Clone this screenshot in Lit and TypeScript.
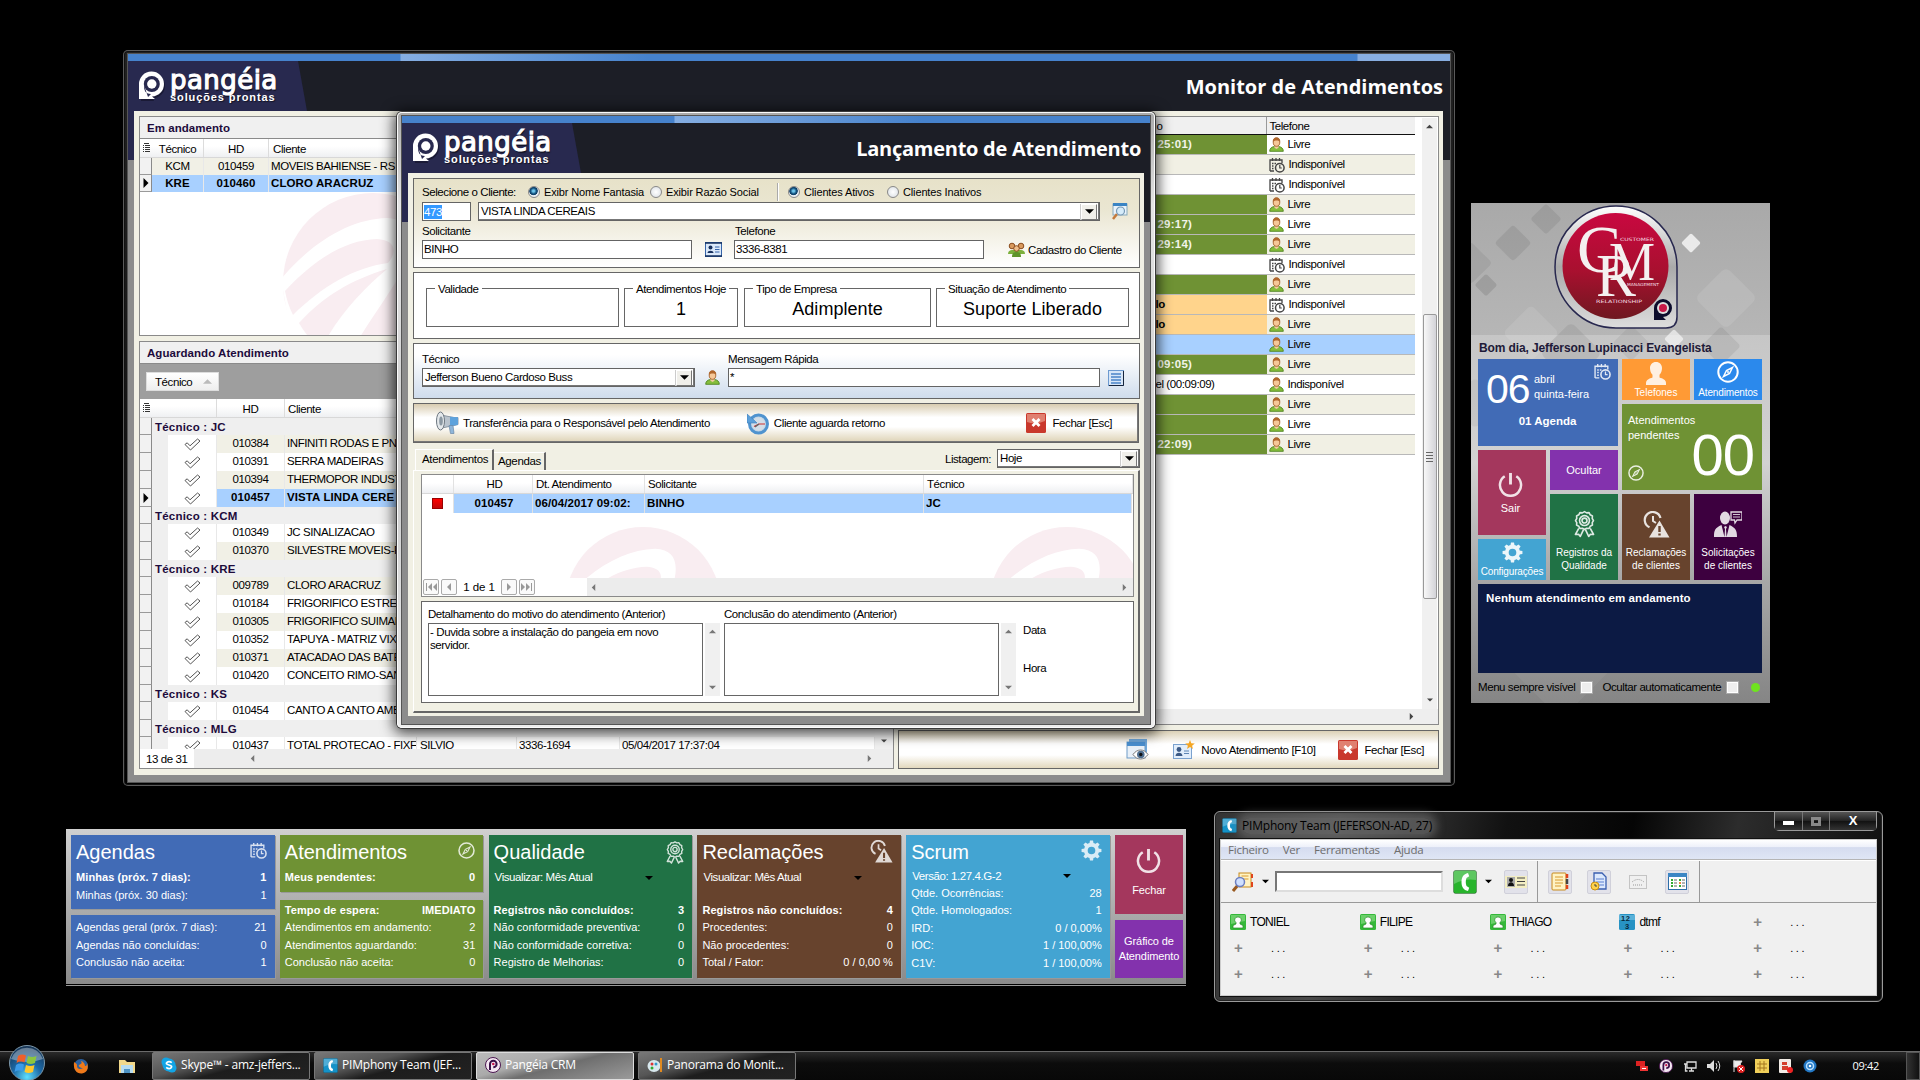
import { LitElement, html, svg, css, nothing } from "lit";
import { customElement, property } from "lit/decorators.js";

/* ---------- icons ---------- */

const person = html`<svg width="15" height="15" viewBox="0 0 15 15">
  <path d="M.700 14.300c0-3 2-4.400 4.800-4.800h4c2.800.4 4.800 1.800 4.800 4.800z" fill="#86bd3c" stroke="#4d8420" stroke-width=".9"/>
  <path d="M5.500 8.500h4v2.300L7.500 12l-2-1.200z" fill="#f0c9a0"/>
  <ellipse cx="7.500" cy="5" rx="3.300" ry="4.300" fill="#f6c898" stroke="#a5612a" stroke-width=".9"/>
  <path d="M4 4.800C4 1.500 5.800.7 7.500.7S11 1.500 11 4.800C9.500 3.200 6 3 4 4.800z" fill="#b0662c"/>
</svg>`;

const calClock = (c: string, s: number) => html`<svg width=${s} height=${s} viewBox="0 0 16 16" fill="none" stroke=${c}>
  <path d="M1 14V3h12v3M1 14h4M3.500 1v3M7 1v3M10.500 1v3" stroke-width="1.300"/>
  <path d="M3 6.500h1.500M5.500 6.500H7M3 9h1.500M3 11.500h1.500" stroke-width="1.400"/>
  <circle cx="10.800" cy="10.800" r="4.300" stroke-width="1.500"/><path d="M10.800 8v3h2" stroke-width="1.200"/>
</svg>`;

const compass = (s: number) => html`<svg width=${s} height=${s} viewBox="0 0 22 22" fill="none" stroke="#fff">
  <circle cx="11" cy="11" r="9.700" stroke-width="2"/>
  <path d="M15.500 6.500l-3 6-6 3 3-6z" stroke-width="1.500"/><circle cx="11" cy="11" r="1" fill="#fff" stroke="none"/>
</svg>`;

const ribbon = (w: number, h: number) => html`<svg width=${w} height=${h} viewBox="0 0 22 28" fill="none" stroke="#fff" stroke-width="1.700" stroke-linejoin="round">
  <path d="M11 1l2.200 1.300 2.600-.2 1.200 2.300 2.300 1.200-.2 2.600L20.400 10.400l-1.300 2.200.2 2.600-2.300 1.200-1.200 2.300-2.600-.2L11 19.800l-2.200-1.300-2.600.2-1.200-2.300-2.300-1.200.2-2.600L1.600 10.400l1.300-2.200-.2-2.600 2.300-1.200 1.200-2.300 2.600.2z"/>
  <circle cx="11" cy="10.400" r="5.200"/><circle cx="11" cy="10.400" r="2.600"/>
  <path d="M5 18.500L1.500 25l3.300-.3L6.600 27 10 20M17 18.500l3.500 6.500-3.300-.3-1.800 2.300L12 20"/>
</svg>`;

const alertClock = (w: number, h: number, bg: string) => html`<svg width=${w} height=${h} viewBox="0 0 27 27" fill="none">
  <path d="M6.500 16.300A8 8 0 1 1 17.500 7" stroke="#fff" stroke-width="2.200"/><path d="M10 5v5l3 2" stroke="#fff" stroke-width="2"/>
  <path d="M16.500 9.500L26.500 26.500H6z" fill="#fff"/><path d="M16.500 15v6M16.500 22.500v2" stroke=${bg} stroke-width="2.400"/>
</svg>`;

const teeth = [0, 45, 90, 135, 180, 225, 270, 315];
const gear = (s: number) => html`<svg width=${s} height=${s} viewBox="0 0 22 22">
  <circle cx="11" cy="11" r="6" fill="none" stroke="#fff" stroke-width="4"/>
  ${teeth.map((a) => svg`<path d="M8.800 4L9.400.6h3.200l.6 3.400z" fill="#fff" transform="rotate(${a} 11 11)"/>`)}
</svg>`;

const power = (s: number) => html`<svg width=${s} height=${s} viewBox="0 0 26 26" fill="none" stroke="#fff" stroke-width="2.600">
  <path d="M7 4.500a11 11 0 1 0 12 0"/><path d="M13 1v12" stroke-width="3"/>
</svg>`;

const bust = html`<svg width="22" height="24" viewBox="0 0 22 24" fill="#fff">
  <path d="M11 0c3.700 0 6 2.700 6 6 0 2.800-1 5.400-2.500 6.800v2.700c3 1 6.500 2.200 6.500 5.500V23H1v-2c0-3.300 3.500-4.500 6.500-5.500v-2.700C6 11.400 5 8.800 5 6c0-3.300 2.300-6 6-6z"/>
</svg>`;

const support = html`<svg width="28" height="27" viewBox="0 0 28 27" fill="#fff">
  <path d="M17 1h11v8h-5l-2 3-.5-3H17z" fill="none" stroke="#fff" stroke-width="1.300"/><path d="M19 3.500h7M19 6h7" stroke="#fff" stroke-width=".9"/>
  <ellipse cx="11" cy="7" rx="5" ry="6.500"/>
  <path d="M0 26c0-7 1-9 7.500-12l3 12 .5-8-1-2 1.500-1 1.500 1-1 2 .5 8 3-12C21.500 17 23 19 23 26z"/>
</svg>`;

const card = html`<svg width="17" height="15" viewBox="0 0 17 15">
  <rect x=".5" y=".5" width="16" height="14" fill="#dbe9fa" stroke="#3563a8"/><path d="M0 14h17M0 1h17" stroke="#16305e" stroke-width="1.600"/>
  <circle cx="5.500" cy="5.500" r="2" fill="#16305e"/><path d="M2.500 11c0-3 6-3 6 0z" fill="#16305e"/><path d="M10 5h4.500M10 7.500h4.500M10 10h4.500" stroke="#3563a8"/>
</svg>`;

const redX = html`<svg width="20" height="20" viewBox="0 0 20 20">
  <rect width="20" height="20" rx="1.500" fill="#c9382c"/><path d="M1 1h18v7Q10 12 1 9z" fill="#e08070"/>
  <path d="M6.500 6l7 7M13.500 6l-7 7" stroke="#fff" stroke-width="2.800"/>
</svg>`;

const check = html`<svg width="17" height="13" viewBox="0 0 17 13"><path d="M1 6.500l2.200-1.700L6 7.800 13.500 1 16 3 6.500 12z" fill="#fff" stroke="#555" stroke-width="1"/></svg>`;

const gridMenu = html`<svg width="7" height="10" viewBox="0 0 7 10" shape-rendering="crispEdges"><path d="M1 .5h5M2 2.500h5M2 4.500h5M2 6.500h5M2 8.500h5" stroke="#333"/><path d="M0 2.500h1M0 4.500h1M0 6.500h1M0 8.500h1" stroke="#333"/></svg>`;

const logoMark = html`<svg width="27" height="31" viewBox="0 0 27 31">
  <path d="M2 30V15A12 12 0 1 1 14 27l1 3z" fill="#0e0e22" opacity=".55"/>
  <path d="M0 28V13A12.500 12.500 0 1 1 13 25.500L16 28z" fill="#fff"/>
  <circle cx="12.800" cy="13" r="8" fill="#28294f"/><path d="M5 14c0 5 1 9 7 9l-3 3z" fill="#28294f"/><circle cx="12.800" cy="13" r="4.700" fill="#fff"/>
</svg>`;

const swoosh = (size: number) => html`<svg class="wm" width=${size} height=${size} viewBox="0 0 180 180">
  <circle cx="90" cy="90" r="90" fill="#f9edf1"/>
  <path d="M-2 86C30 48 68 26 104 25C126 26 131 40 126 62C118 88 88 122 58 176L10 152z" fill="#fff"/>
  <path d="M2 98C32 66 62 47 94 46C112 47 115 58 105 70C72 74 38 94 10 122A90 90 0 0 1 2 98z" fill="#f9edf1"/>
  <path d="M16 130C42 102 68 87 104 76C80 96 54 124 38 156A90 90 0 0 1 16 130z" fill="#f9edf1"/>
</svg>`;

const tri = (dir: "up" | "down" | "left" | "right", c = "#777", s = 7) => {
  const d = { up: "M0 6h8L4 2z", down: "M0 2h8L4 6z", left: "M6 0v8L2 4z", right: "M2 0v8l4-4z" }[dir];
  return html`<svg width=${s} height=${s} viewBox="0 0 8 8"><path d=${d} fill=${c}/></svg>`;
};

const step = (d: string) => html`<svg width="12" height="8" viewBox="0 0 12 8"><path d=${d} fill="#999"/></svg>`;

const phoneIcon = (w: number, h: number, c1: string) => html`<svg width=${w} height=${h} viewBox="0 0 24 24" preserveAspectRatio="none">
  <rect x=".5" y=".5" width="23" height="23" rx="2" fill=${c1} stroke="#0004"/><path d="M1 1h22v9Q12 8 1 14z" fill="#fff" opacity=".25"/>
  <path d="M15 3c-4.500 1-6.500 4-6.500 9s2 8 6.500 9l1.200-3.300-2.700-1.700c-1-2.500-1-5.500 0-8L16.200 6.300z" fill="#fff"/>
</svg>`;

const magnifier = html`<svg width="16" height="17" viewBox="0 0 16 17">
  <rect x="1" y="1" width="14" height="11" fill="#eaf3fb" stroke="#8ab"/><rect x="1" y="0" width="14" height="3" fill="#3a84c4"/>
  <path d="M5 11l-4 5" stroke="#c47a3c" stroke-width="2.500"/><circle cx="8.500" cy="8" r="4" fill="#d6ecfa" stroke="#7799b5" stroke-width="1.200"/>
</svg>`;

const group = html`<svg width="17" height="15" viewBox="0 0 17 15">
  <path d="M0 12c0-3 2-4 4-4h9c2 0 4 1 4 4z" fill="#7db03c"/><circle cx="4" cy="4" r="2.800" fill="#d99a5e" stroke="#8b4d1f"/><circle cx="13" cy="4" r="2.800" fill="#d99a5e" stroke="#8b4d1f"/>
  <path d="M4 15c0-4 2-5 4.500-5s4.500 1 4.500 5z" fill="#5d9428"/><circle cx="8.500" cy="6.500" r="2.800" fill="#f0bf8c" stroke="#8b4d1f"/>
</svg>`;

const megaphone = html`<svg width="24" height="24" viewBox="0 0 24 24">
  <path d="M6 4l13 2.500h4v7l-4 1L7 17z" fill="#b9c3cd" stroke="#78848f" stroke-width=".8"/><path d="M15 5.800l8 .5v7.500l-8 1.700z" fill="#5ea2dc"/>
  <path d="M14 14.500l1.500 8h3.500l-1-8z" fill="#8fb6da" stroke="#6886a6" stroke-width=".7"/>
  <ellipse cx="5.500" cy="10" rx="4" ry="9" fill="#e4e8eb" stroke="#6d7780" stroke-width="1"/><ellipse cx="6" cy="10" rx="1.800" ry="4.500" fill="#8b98a2"/>
</svg>`;

const refresh = html`<svg width="22" height="23" viewBox="0 0 22 23" fill="none">
  <circle cx="11.500" cy="12" r="9" fill="#c4d6e6" stroke="#4f93cf" stroke-width="3"/><circle cx="11.500" cy="12" r="6.500" fill="#d3dee8"/>
  <path d="M0 2v9h10L7 8z" fill="#5b9fda" stroke="#3f7fb8" stroke-width=".6"/><path d="M7 14.500l5-2.500h6" stroke="#c33" stroke-width="1.200"/><path d="M8 15l4-3" stroke="#666" stroke-width="1.300"/>
</svg>`;

const listIcon = html`<svg width="16" height="16" viewBox="0 0 16 16">
  <rect x=".5" y=".5" width="15" height="15" fill="#d7e6f8" stroke="#6d9ad0"/><path d="M1 15.500h14.500V1" stroke="#16243c" fill="none"/>
  <path d="M3 4h10M3 7h10M3 10h10M3 13h10" stroke="#4b84c8" stroke-width="1.600"/>
</svg>`;

const eyeWindow = html`<svg width="23" height="22" viewBox="0 0 23 22">
  <rect x="3" y="0" width="18" height="14" fill="#6fa8dc"/><rect x="1" y="3" width="18" height="16" fill="#e8f0f8" stroke="#6f9cc8"/><rect x="1" y="3" width="18" height="4" fill="#4a8fd0"/>
  <path d="M7 15.500c4-6 11-6 15 0-4 6-11 6-15 0z" fill="#fff" stroke="#777"/><circle cx="14.800" cy="15.500" r="3.800" fill="#4f6f90"/><circle cx="14.800" cy="15.500" r="1.700" fill="#111"/>
</svg>`;

const newCard = html`<svg width="22" height="20" viewBox="0 0 22 20">
  <rect x=".5" y="4.500" width="18" height="14" fill="#e2eefb" stroke="#7ba2cf"/><circle cx="6" cy="9.500" r="2.400" fill="#3c5a86"/><path d="M2.500 16c0-4.500 7-4.500 7 0z" fill="#3c5a86"/>
  <path d="M11 11h5M11 13.500h5" stroke="#5f86b4"/><path d="M17 0l1.300 3.200 3.500.3-2.700 2.200.9 3.300-3-1.900-3 1.900.9-3.300-2.700-2.200 3.500-.3z" fill="#f5a623"/>
</svg>`;

/* ---------- shared styles ---------- */

const base = css`
  * { box-sizing: border-box; }
  svg { display: block; flex: none; }
  .row { display: flex; align-items: center; }
  .grow { flex: 1; min-width: 0; }
  .ms { font: 11.500px/14px "Liberation Sans", Arial, sans-serif; letter-spacing: -0.42px; color: #000; white-space: nowrap; }
  .b { font-weight: 700; letter-spacing: 0.100px; }
`;

/* ---------- window frame ---------- */

@customElement("crm-window")
export class CrmWindow extends LitElement {
  @property() heading = "";
  static styles = [base, css`
    :host { display: flex; flex-direction: column; border-radius: 5px; padding: 4px 5px; isolation: isolate; }
    .client { flex: 1; display: flex; flex-direction: column; min-height: 0; outline: 1px solid #555;
      background: linear-gradient(to right, #28294f 50%, #1c1e26 50%) 0 0 / 100% 106px no-repeat #8c8c8c; }
    .bar { height: 7px; }
    :host([main]) .bar { background: linear-gradient(to right, #4682cc 272px, #85aee2 273px, #4682cc 520px, #4682cc 1229px, #88aee0 1230px); }
    :host(:not([main])) .bar { background: linear-gradient(to right, #4682cc 272px, #85aee2 273px, #6d9dd9 380px, #4682cc 520px); }
    .head { height: 50px; display: flex; background: #1c1e26; }
    .brand { width: 180px; background: #28294f; clip-path: polygon(0 0, 170px 0, 179px 100%, 0 100%); padding: 10px 0 0 11px; display: flex; gap: 4px; color: #fff; }
    .names { width: 124px; }
    .n1 { font: 26px/22px "DejaVu Sans", sans-serif; -webkit-text-stroke: 1.200px #fff; letter-spacing: 0.450px; margin-top: -2px; height: 23px; text-shadow: 1px 2px 1px #0008; }
    .n2 { font: bold 11px/10px "Liberation Sans", sans-serif; letter-spacing: .9px; white-space: nowrap; text-shadow: 1px 1px 1px #0008; }
    h1 { margin: 0 9px 0 auto; font: bold 20px/51px "Open Sans", "Noto Sans", sans-serif; letter-spacing: -0.260px; color: #fff; }
    :host([main]) h1 { letter-spacing: 0; margin-right: 7px; }
    .panel { flex: 1; min-height: 0; display: flex; flex-direction: column; margin: 0 6px 8px; background: #f1f0e4; }
    :host([main]) .panel { margin: 0 7px 7px 6px; }
  `];
  render() {
    return html`<div class="client">
      <div class="bar"></div>
      <div class="head">
        <div class="brand">${logoMark}<div class="names"><div class="n1">pangéia</div><div class="n2">soluções prontas</div></div></div>
        <h1>${this.heading}</h1>
      </div>
      <div class="panel"><slot></slot></div>
    </div>`;
  }
}

/* ---------- attendance monitor ---------- */

type Line = { group: string } | { hd: string; name: string; sel?: boolean; alt?: boolean; who?: string; tel?: string; at?: string };
const lines: Line[] = [
  { group: "JC" },
  { hd: "010384", name: "INFINITI RODAS E PN", alt: true },
  { hd: "010391", name: "SERRA MADEIRAS" },
  { hd: "010394", name: "THERMOPOR INDUST", alt: true },
  { hd: "010457", name: "VISTA LINDA CERE", sel: true },
  { group: "KCM" },
  { hd: "010349", name: "JC SINALIZACAO" },
  { hd: "010370", name: "SILVESTRE MOVEIS-R", alt: true },
  { group: "KRE" },
  { hd: "009789", name: "CLORO ARACRUZ", alt: true },
  { hd: "010184", name: "FRIGORIFICO ESTREL" },
  { hd: "010305", name: "FRIGORIFICO SUIMAR", alt: true },
  { hd: "010352", name: "TAPUYA - MATRIZ VIX" },
  { hd: "010371", name: "ATACADAO DAS BATE", alt: true },
  { hd: "010420", name: "CONCEITO RIMO-SAN" },
  { group: "KS" },
  { hd: "010454", name: "CANTO A CANTO AMB" },
  { group: "MLG" },
  { hd: "010437", name: "TOTAL PROTECAO - FIXF", who: "SILVIO", tel: "3336-1694", at: "05/04/2017 17:37:04" },
];

const phones: { c: string; t?: string; off?: boolean; busy?: boolean }[] = [
  { c: "g", t: "25:01)" }, { c: "", busy: true }, { c: "", busy: true }, { c: "g" }, { c: "g", t: "29:17)" }, { c: "g", t: "29:14)" },
  { c: "", busy: true }, { c: "g" }, { c: "o", t: "lo", busy: true }, { c: "o", t: "lo" }, { c: "s" }, { c: "g", t: "09:05)" },
  { c: "n", t: "el (00:09:09)", off: true }, { c: "g" }, { c: "g" }, { c: "g", t: "22:09)" },
];
const shaded = [1, 3, 5, 7, 9, 11, 13, 15];

@customElement("crm-monitor")
export class CrmMonitor extends LitElement {
  static styles = [base, css`
    :host { flex: 1; min-height: 0; display: flex; gap: 4px; padding: 5px 4px 6px 5px; }
    .left { width: 756px; display: flex; flex-direction: column; gap: 5px; }
    .right { width: 541px; display: flex; flex-direction: column; gap: 5px; }
    .box { border: 1px solid #8a8a8a; background: #fff; display: flex; flex-direction: column; overflow: hidden; position: relative; }
    .ea { height: 220px; flex: none; }
    .cap { height: 22px; flex: none; background: #f0f0f0; border-bottom: 1px solid #8a8a8a; padding: 0 7px; line-height: 22px; color: #1d0b3c; letter-spacing: .05px; }
    .hrow { height: 19px; flex: none; display: flex; background: linear-gradient(#fff 40%, #eff0f2); border-bottom: 1px solid #d8d8d8; line-height: 20px; }
    .hrow > * { border-right: 1px solid #dcdcdc; padding-left: 4px; }
    .hrow > .w12 { display: flex; align-items: center; justify-content: center; padding: 0; border: 0; }
    .c { text-align: center; padding-left: 0 !important; }
    .w12 { width: 12px; flex: none; } .w52 { width: 52px; flex: none; } .w65 { width: 65px; flex: none; } .w68 { width: 68px; flex: none; }
    .w132 { width: 132px; flex: none; } .w100 { width: 100px; flex: none; } .w103 { width: 103px; flex: none; }
    .d { display: flex; height: 18px; flex: none; line-height: 17px; position: relative; z-index: 1; }
    .ea .d { line-height: 17px; height: 17.500px; }
    .ea .d.b, .ea .d { margin-top: -.5px; }
    .d > * { overflow: hidden; border-right: 1px solid #e8e8e8; padding-left: 2px; }
    .d .w100 { padding-left: 3px; }
    .d > .ind, .ind { width: 12px; flex: none; background: #f2f2f2; border-right: 1px solid #8a8a8a; border-bottom: 1px solid #9a9a9a; display: flex; align-items: center; justify-content: center; padding: 0; }
    .alt { background: #f1f0e6; } .sel { background: #a8d0ff; }
    .g { height: 17px; display: flex; background: #efefef; flex: none; line-height: 18px; color: #1d0b3c; }
    .g span { padding-left: 3px; letter-spacing: .2px; }
    .pad { width: 16px; background: #efefef; flex: none; border: 0 !important; }
    .ck { width: 49px; flex: none; background: #fff; display: flex; align-items: center; justify-content: center; padding: 0 !important; }
    .gp { height: 35px; background: #9e9e9e; flex: none; padding: 8px 6px; }
    .btn { width: 73px; height: 19px; background: linear-gradient(#fff, #eee); border: 1px solid #ddd; display: flex; align-items: center; justify-content: space-between; padding: 0 6px 0 8px; }
    .wm { position: absolute; left: 143px; top: 76px; }
    .foot { height: 19px; display: flex; align-items: center; background: #ededed; flex: none; position: relative; z-index: 1; }
    .cnt { background: #fff; width: 54px; padding-left: 6px; line-height: 20px; margin-right: 55px; }
    .lst { display: flex; align-items: stretch; overflow: hidden; flex: 1; min-height: 0; }
    .rows { flex: 1; min-height: 0; display: flex; flex-direction: column; overflow: hidden; }
    .vs { width: 18px; background: #f0f0f0; display: flex; flex-direction: column; justify-content: flex-end; align-items: center; padding-bottom: 5px; }
    .tb { display: flex; flex: 1; min-height: 0; }
    .tbl { width: 516px; }
    .th { display: flex; height: 18px; background: #f0f0f0; border-bottom: 1px solid #111; line-height: 18px; }
    .th > :first-child { width: 368px; border-right: 1px solid #999; padding-left: 257px; } .th > :last-child { padding-left: 2px; }
    .p { display: flex; height: 20px; border-bottom: 1px solid #b8b8b8; line-height: 19px; }
    .p > :first-child { width: 368px; padding-left: 258px; }
    .p > :last-child { flex: 1; display: flex; align-items: center; gap: 3px; padding-left: 2px; }
    .p .x0 { background: #f1f0e4; }
    .p .x1 { background: #fff; }
    .p .green { background: #6f9234; color: #f2f5ea; letter-spacing: .25px; font-weight: 700; } .p .orange { background: #ffd48c; font-weight: 700; padding-left: 256px; }
    .p .blue { background: #a8d0ff; } .p .nn { padding-left: 256px; background: #fff; }
    .sb { width: 15px; margin: 1px 1px 0 auto; background: #f0f0f0; display: flex; flex-direction: column; align-items: center; }
    .sb .u { height: 17px; padding-top: 5px; } .track { height: 179px; }
    .thumb { width: 14px; height: 285px; border: 1px solid #999; border-radius: 2px; background: linear-gradient(to right, #f8f8f8, #d3d3d8); display: flex; flex-direction: column; justify-content: center; align-items: center; gap: 2px; }
    .thumb i { width: 7px; height: 1px; background: #666; }
    .hs { height: 15px; background: #eee; display: flex; justify-content: flex-end; align-items: center; padding-right: 23px; }
    .bar { height: 39px; flex: none; border: 1px solid #666; background: linear-gradient(#dcd1b6, #fff 35%, #fff 65%, #e2d8bd); display: flex; align-items: center; justify-content: flex-end; padding-right: 14px; }
    .bar span { margin-left: 6px; } .m1 { margin-left: 24px; } .m2 { margin-left: 23px; }
    .end { width: 20px; }
  `];
  private line(l: Line) {
    if ("group" in l) return html`<div class="g b"><div class="ind"></div><span>Técnico : ${l.group}</span></div>`;
    const bg = l.sel ? "sel b" : l.alt ? "alt" : "";
    return html`<div class="d"><div class="ind">${l.sel ? tri("right", "#000", 10) : nothing}</div><div class="pad"></div><div class="ck">${check}</div>
      <div class="w68 c ${bg}">${l.hd}</div><div class="w132 ${bg}">${l.name}</div><div class="w100 ${bg}">${l.who}</div><div class="w103">${l.tel}</div><div class="grow">${l.at}</div></div>`;
  }
  render() {
    const ic = tri("down", "#444", 6);
    return html`
      <div class="left ms">
        <div class="box ea">
          <div class="cap b">Em andamento</div>
          <div class="hrow"><div class="w12">${gridMenu}</div><div class="w52 c">Técnico</div><div class="w65 c">HD</div><div class="grow">Cliente</div></div>
          ${swoosh(180)}
          <div class="d"><div class="ind"></div><div class="w52 c alt">KCM</div><div class="w65 c alt">010459</div><div class="grow alt">MOVEIS BAHIENSE - RS</div></div>
          <div class="d b"><div class="ind">${tri("right", "#000", 10)}</div><div class="w52 c sel">KRE</div><div class="w65 c sel">010460</div><div class="grow sel">CLORO ARACRUZ</div></div>
        </div>
        <div class="box grow">
          <div class="cap b">Aguardando Atendimento</div>
          <div class="gp"><div class="btn"><span>Técnico</span>${tri("up", "#bbb", 9)}</div></div>
          <div class="lst">
            <div class="rows">
              <div class="hrow"><div class="w12">${gridMenu}</div><div class="w65"></div><div class="w68 c">HD</div><div class="grow" style="padding-left:3px">Cliente</div></div>
              ${lines.map((l) => this.line(l))}
            </div>
            <div class="vs">${ic}</div>
          </div>
          <div class="foot"><div class="cnt">13 de 31</div>${tri("left")}<div class="grow"></div>${tri("right")}<div class="end"></div></div>
        </div>
      </div>
      <div class="right ms">
        <div class="box grow">
          <div class="tb">
            <div class="tbl">
              <div class="th"><div>o</div><div>Telefone</div></div>
              ${phones.map((p, i) => html`<div class="p">
                <div class=${{ g: "green", o: "orange", s: "blue", n: "nn", "": i % 2 ? "x0" : "x1" }[p.c]!}>${p.t}</div>
                <div class=${p.c === "s" ? "blue" : shaded.includes(i) ? "x0" : "x1"}>${p.busy ? calClock("#444", 16) : person}<span>${p.busy || p.off ? "Indisponível" : "Livre"}</span></div>
              </div>`)}
            </div>
            <div class="sb"><div class="u">${tri("up", "#444")}</div><div class="track"></div><div class="thumb"><i></i><i></i><i></i><i></i></div><div class="grow"></div><div class="u">${ic}</div></div>
          </div>
          <div class="hs">${tri("right", "#444")}</div>
        </div>
        <div class="bar">${eyeWindow}<div class="m1">${newCard}</div><span>Novo Atendimento [F10]</span><div class="m2">${redX}</div><span>Fechar [Esc]</span></div>
      </div>`;
  }
}

/* ---------- attendance form ---------- */

@customElement("crm-form")
export class CrmForm extends LitElement {
  static styles = [base, css`
    :host { flex: 1; display: flex; flex-direction: column; padding: 5px 4px 5px 5px; }
    .box { border: 1px solid #666; background: #fff; margin-bottom: 4px; flex: none; width: 727px; }
    .b1 { height: 90px; background: linear-gradient(#e7e2c9, #eae6d2 35%, #fff); padding: 5px 8px 0; }
    .radios { height: 15px; font: 11px/14px "Liberation Sans", sans-serif; letter-spacing: 0; }
    .sl { width: 106px; font-size: 11.500px; letter-spacing: -.42px; }
    .r { width: 12px; height: 12px; border-radius: 50%; border: 1px solid #888; background: radial-gradient(#fff, #d8dde2); margin-right: 4px; flex: none; }
    .on { background: radial-gradient(circle at 45% 40%, #6cc3ea 0 12%, #12527f 35%, #0e3e66 48%, #e8edf2 56%); }
    .r1 { width: 106px; } .r2 { width: 111px; } .sp { width: 2px; height: 18px; margin-right: 9px; border-left: 1px solid #aaa; border-right: 1px solid #fff; } .r3 { width: 83px; }
    .radios > * { flex: none; letter-spacing: -.14px; } .radios > .sl { letter-spacing: -.42px; }
    .in { height: 19px; border: 1px solid #646464; background: #fff; padding-left: 1px; line-height: 17px; display: flex; align-items: center; justify-content: space-between; flex: none; }
    .combo { padding-left: 2px; box-shadow: inset -1px -1px #777; }
    .dd { width: 16px; height: 16px; margin-right: 2px; background: #f0efea; border: 1px solid; border-color: #fff #777 #777 #fff; display: flex; align-items: center; justify-content: center; box-shadow: -1px 0 #ccc; }
    mark { background: #3399ff; color: #fff; line-height: 14px; }
    .fields { height: 19px; margin-top: 3px; }
    .labels { height: 14px; margin-top: 3px; } .labels > :first-child { width: 313px; }
    .b2 { height: 67px; padding: 15px 10px 0 12px; display: flex; gap: 5px; }
    .fs { position: relative; height: 39px; border: 1px solid #666; flex: none; text-align: center; font: 18px/40px "Liberation Sans", sans-serif; letter-spacing: .05px; }
    .fs:nth-child(3) { margin-left: 1px; }
    .fs legend { position: absolute; left: 8px; top: -7px; padding: 0 3px; background: #fff; }
    .b3 { height: 56px; background: linear-gradient(#fff 20%, #cfdcec); padding: 8px 8px 0; }
    .b3 .labels { margin-top: 0; } .b3 .labels > :first-child { width: 306px; } .b3 .fields { margin-top: 2px; }
    .b4 { height: 40px; width: 726px; margin-bottom: 5px; background: linear-gradient(#d8ccb0, #fff 35%, #fff 60%, #ded3b6); box-shadow: inset -1px -1px #777; padding-left: 21px; }
    .tabs { height: 22px; display: flex; align-items: flex-end; flex: none; }
    .tab { height: 18px; border-right: 2px solid #666; border-top: 1px solid #fff; padding: 0 4px; line-height: 17px; width: 52px; letter-spacing: -.35px; }
    .tab.a { height: 21px; line-height: 19px; width: 79px; padding: 0 6px; border-left: 1px solid #fff; margin-left: 2px; letter-spacing: -.35px; background: #f1f0e4; }
    .ls { padding-bottom: 4px; }
    .page { width: 727px; height: 243px; border: 1px solid #fff; border-right: 2px solid #666; border-bottom: 2px solid #666; padding: 3px 6px 0 7px; flex: none; }
    .grid { height: 123px; width: 713px; border: 1px solid #8a8a8a; background: #fff; position: relative; overflow: hidden; display: flex; flex-direction: column; }
    .h, .d { display: grid; grid-template-columns: 32px 79px 112px 279px 1fr; height: 19px; line-height: 19px; position: relative; z-index: 1; }
    .h { background: linear-gradient(#fff 45%, #eeeff2); border-bottom: 1px solid #d8d8d8; }
    .h > *, .d > * { border-right: 1px solid #e2e2e2; padding-left: 3px; overflow: hidden; }
    .d > :nth-child(2), .d > :nth-child(4), .d > :nth-child(5) { letter-spacing: .1px; }
    .d > :not(:first-child) { background: #a8d0ff; } .c { text-align: center; }
    .d { margin-right: 1px; line-height: 18px; }
    .d > :not(:first-child) { padding-left: 2px; }
    .sq { width: 11px; height: 11px; margin: 4px 0 0 7px; background: linear-gradient(#f00, #c00808); border: 1px solid #900; }
    .wa, .wb { position: absolute; top: 52px; height: 51px; overflow: hidden; } .wa { left: 143px; } .wb { left: 567px; }
    .nav { height: 18px; margin-top: auto; display: flex; align-items: center; gap: 2px; padding-left: 1px; background: #fff; position: relative; z-index: 1; }
    .nb { width: 16px; height: 16px; border: 1px solid #aaa; border-radius: 2px; display: flex; align-items: center; justify-content: center; background: #fafafa; }
    .nv { width: 40px; text-align: center; letter-spacing: -.1px; }
    .hs { flex: 1; height: 18px; margin-left: 50px; background: #ececec; display: flex; justify-content: space-between; align-items: center; padding: 0 5px 0 3px; }
    .bot { height: 102px; width: 713px; margin-top: 4px; border: 1px solid #666; background: #fff; padding: 5px 6px; display: flex; }
    .bot .lb { letter-spacing: -.44px; }
    .ta { height: 73px; width: 275px; border: 1px solid #666; padding: 2px 1px; line-height: 13px; margin-top: 2px; letter-spacing: -.4px; }
    .sc { width: 15px; height: 73px; background: #f0f0f0; margin: 16px 4px 0 2px; display: flex; flex-direction: column; justify-content: space-between; align-items: center; padding: 5px 0; }
    .dt { padding: 16px 0 0 3px; display: flex; flex-direction: column; gap: 24px; }
  `];
  render() {
    const dd = html`<div class="dd">${tri("down", "#000", 9)}</div>`;
    const sc = html`<div class="sc">${tri("up")}${tri("down")}</div>`;
    const fs = (w: number, l: string, t: string) => html`<div class="fs" style="width:${w}px"><legend class="ms">${l}</legend>${t}</div>`;
    const px = (w: number) => html`<div style="width:${w}px;flex:none"></div>`;
    return html`
      <div class="ms">
      <div class="box b1">
        <div class="row radios"><div class="sl">Selecione o Cliente:</div>
          <i class="r on"></i><div class="r1">Exibr Nome Fantasia</div><i class="r"></i><div class="r2">Exibir Razão Social</div><div class="sp"></div>
          <i class="r on"></i><div class="r3">Clientes Ativos</div><i class="r"></i><div>Clientes Inativos</div></div>
        <div class="row fields"><div class="in" style="width:49px"><mark>473</mark></div>${px(7)}
          <div class="in combo" style="width:622px"><span>VISTA LINDA CEREAIS</span>${dd}</div>${px(12)}${magnifier}</div>
        <div class="row labels"><div>Solicitante</div><div>Telefone</div></div>
        <div class="row fields" style="margin-top:2px"><div class="in" style="width:270px">BINHO</div>${px(13)}${card}${px(12)}
          <div class="in" style="width:250px">3336-8381</div>${px(24)}${group}${px(3)}<span>Cadastro do Cliente</span></div>
      </div>
      <div class="box b2">${fs(193, "Validade", "")}${fs(114, "Atendimentos Hoje", "1")}${fs(187, "Tipo de Empresa", "Adimplente")}${fs(193, "Situação de Atendimento", "Suporte Liberado")}</div>
      <div class="box b3">
        <div class="row labels"><div>Técnico</div><div>Mensagem Rápida</div></div>
        <div class="row fields"><div class="in combo" style="width:273px"><span>Jefferson Bueno Cardoso Buss</span>${dd}</div>${px(10)}${person}${px(8)}
          <div class="in" style="width:372px">*</div>${px(8)}${listIcon}</div>
      </div>
      <div class="box b4 row">${megaphone}${px(4)}<span>Transferência para o Responsável pelo Atendimento</span>${px(37)}${refresh}${px(5)}<span>Cliente aguarda retorno</span><div class="grow"></div>${redX}${px(6)}<span>Fechar [Esc]</span>${px(26)}</div>
      <div class="tabs"><div class="tab a">Atendimentos</div><div class="tab">Agendas</div><div class="grow"></div>
        <span class="ls">Listagem:</span>${px(6)}<div class="in combo" style="width:143px;margin-bottom:2px"><span>Hoje</span>${dd}</div></div>
      <div class="page">
        <div class="grid">
          <div class="wa">${swoosh(156)}</div><div class="wb">${swoosh(156)}</div>
          <div class="h"><div></div><div class="c">HD</div><div>Dt. Atendimento</div><div>Solicitante</div><div>Técnico</div></div>
          <div class="d b"><div><div class="sq"></div></div><div class="c">010457</div><div>06/04/2017 09:02:</div><div>BINHO</div><div>JC</div></div>
          <div class="nav"><div class="nb">${step("M1 0h1v8H1zM7 0v8L3 4zM12 0v8L8 4z")}</div><div class="nb">${tri("left", "#999", 8)}</div>
            <span class="nv">1 de 1</span><div class="nb">${tri("right", "#999", 8)}</div><div class="nb">${step("M0 0v8l4-4zM5 0v8l4-4zM10 0h1v8h-1z")}</div>
            <div class="hs">${tri("left")}${tri("right")}</div></div>
        </div>
        <div class="bot">
          <div><div class="lb">Detalhamento do motivo do atendimento (Anterior)</div><div class="ta">- Duvida sobre a instalação do pangeia em novo<br>servidor.</div></div>${sc}
          <div><div class="lb">Conclusão do atendimento (Anterior)</div><div class="ta"></div></div>${sc}
          <div class="dt"><div>Data</div><div>Hora</div></div>
        </div>
      </div>
      </div>`;
  }
}

/* ---------- side menu ---------- */

@customElement("crm-menu")
export class CrmMenu extends LitElement {
  static styles = [base, css`
    :host { display: flex; flex-direction: column; padding: 0 8px 0 7px; position: relative; overflow: hidden; background: linear-gradient(#a9a9a9, #b6b6b6 26.500%, #c6c6c6 26.500%, #d2d2d2 52%, #a8a8a8 75%, #858585); font: 11px/13px "Liberation Sans", sans-serif; color: #fff; }
    .bgd { position: absolute; left: 0; top: 0; }
    .top { height: 137px; position: relative; display: flex; justify-content: center; padding: 2px 9px 0 0; }
    .hi { height: 19px; position: relative; color: #1e1a38; font: bold 12px/17px "Liberation Sans", sans-serif; white-space: nowrap; padding-left: 1px; letter-spacing: -.12px; }
    .tiles { position: relative; display: grid; grid-template-columns: repeat(4, 68px); grid-template-rows: 41px 42px 40px 41px 41px 89px; gap: 4px; }
    .t { display: flex; flex-direction: column; align-items: center; text-align: center; justify-content: flex-end; white-space: nowrap; }
    .t svg { opacity: .85; }
    .ag { grid-area: 1 / 1 / 3 / 3; background: #416bb6; display: grid; grid-template-columns: 54px 1fr 24px; grid-template-rows: 50px 14px; padding: 4px 0 0 2px; text-align: left; align-items: start; align-content: start; justify-content: stretch; }
    .ag .n { font-size: 41px; line-height: 52px; letter-spacing: -1px; padding-left: 6px; } .ag .m { line-height: 15px; padding-top: 9px; }
    .ag .q { grid-column: 1 / 4; text-align: center; font-weight: 700; font-size: 11.500px; line-height: 16px; padding-right: 3px; }
    .tel { background: #ff9a35; font-size: 10px; padding-bottom: 1px; } .ate { background: #2b89ec; font-size: 10px; letter-spacing: -.15px; padding-bottom: 1px; gap: 3px; } .ate svg { opacity: 1; }
    .pen { grid-area: 2 / 3 / 4 / 5; background: #6f9234; position: relative; align-items: flex-start; text-align: left; justify-content: flex-start; padding: 9px 6px; line-height: 15px; }
    .pen .z { position: absolute; right: 8px; bottom: 10px; font-size: 58px; line-height: 50px; letter-spacing: -1px; }
    .pen svg { margin-top: auto; }
    .sai { grid-area: 3 / 1 / 5 / 2; background: #a4375d; justify-content: center; gap: 5px; padding: 1px 3px 0 0; }
    .oc { background: #8332ad; justify-content: center; }
    .cf { grid-area: 5 / 1; background: #43a4d2; font-size: 10px; letter-spacing: -.15px; padding-bottom: 2px; gap: 2px; } .cf svg { opacity: .9; }
    .k { font-size: 10px; padding-bottom: 8px; } .k svg { margin-bottom: 8px; }
    .k1 { grid-area: 4 / 2 / 6 / 3; background: #207245; } .k2 { grid-area: 4 / 3 / 6 / 4; background: #67432d; } .k3 { grid-area: 4 / 4 / 6 / 5; background: #3d003f; }
    .no { grid-area: 6 / 1 / 7 / 5; background: #0c1a44; align-items: flex-start; justify-content: flex-start; padding: 8px; font-weight: 700; font-size: 11.500px; letter-spacing: .09px; }
    .ft { position: relative; height: 28px; } .ft i { width: 11px; height: 11px; background: #eee; border: 1px solid #fff; box-shadow: 0 0 0 1px #aaa; margin-left: 6px; flex: none; }
    .dot { width: 9px; height: 9px; border-radius: 50%; background: #6fe31f; margin-left: 13px; }
    .oa { margin-left: 10px; }
  `];
  render() {
    const dia = (x: number, y: number, s: number, o: number, c = "#fff") => svg`<rect x=${x - s} y=${y - s} width=${s * 2} height=${s * 2} rx=${s / 4} transform="rotate(45 ${x} ${y})" fill=${c} opacity=${o}/>`;
    return html`
      <svg class="bgd" width="299" height="500">
        ${dia(220, 40, 7, .75)}${dia(203, 136, 7, .6)}${dia(15, 82, 8, .2, "#555")}${dia(42, 40, 13, .16, "#555")}${dia(0, 60, 15, .15, "#666")}${dia(75, 16, 11, .1, "#333")}
        ${dia(255, 95, 22, .1)}${dia(100, 150, 22, .14, "#666")}${dia(250, 143, 14, .14, "#666")}${dia(160, 140, 13, .14, "#777")}${dia(60, 130, 20, .1)}${dia(90, 460, 40, .05)}${dia(4, 200, 18, .1, "#777")}
      </svg>
      <div class="top"><svg width="124" height="124" viewBox="0 0 124 124">
        <defs><linearGradient id="s" x2="0" y2="1"><stop offset="0" stop-color="#fff"/><stop offset=".5" stop-color="#aaa"/><stop offset="1" stop-color="#ddd"/></linearGradient>
        <linearGradient id="r" x2="0" y2="1"><stop offset="0" stop-color="#c90840"/><stop offset=".55" stop-color="#a8102f"/><stop offset="1" stop-color="#6f1820"/></linearGradient></defs>
        <path d="M62 1A61 61 0 0 1 123 62V112Q123 123 112 123H62A61 61 0 0 1 62 1z" fill="url(#s)" stroke="#28284f" stroke-width="1.500"/>
        <circle cx="61.500" cy="61" r="53" fill="url(#r)"/>
        <g fill="#f4f0f0" font-family="Liberation Serif, serif"><text x="23" y="67" font-size="67" textLength="44" lengthAdjust="spacingAndGlyphs">C</text><text x="55" y="75" font-size="54" textLength="46" lengthAdjust="spacingAndGlyphs">M</text><text x="42" y="91" font-size="62" textLength="40" lengthAdjust="spacingAndGlyphs">R</text></g>
        <g fill="#f6dfe4" font-family="DejaVu Sans, sans-serif" font-size="4.500"><text x="66" y="36" textLength="34" lengthAdjust="spacingAndGlyphs">CUSTOMER</text><text x="73" y="81" font-size="4" textLength="32" lengthAdjust="spacingAndGlyphs">MANAGEMENT</text><text x="42" y="98" textLength="46" lengthAdjust="spacingAndGlyphs">RELATIONSHIP</text></g>
        <path d="M100 115V103A9 9 0 1 1 109 112L112 115z" fill="#0c0c2c"/><circle cx="109" cy="103" r="6" fill="#ddd"/><circle cx="109" cy="103" r="4" fill="#c81848"/>
      </svg></div>
      <div class="hi">Bom dia, Jefferson Lupinacci Evangelista</div>
      <div class="tiles">
        <div class="t ag"><div class="n">06</div><div class="m">abril<br>quinta-feira</div>${calClock("#fff", 17)}<div class="q">01 Agenda</div></div>
        <div class="t tel">${bust}<span>Telefones</span></div>
        <div class="t ate">${compass(22)}<span>Atendimentos</span></div>
        <div class="t pen">Atendimentos<br>pendentes${compass(16)}<div class="z">00</div></div>
        <div class="t sai">${power(25)}<span>Sair</span></div>
        <div class="t oc">Ocultar</div>
        <div class="t cf">${gear(21)}<span>Configurações</span></div>
        <div class="t k k1">${ribbon(21, 28)}<span>Registros da<br>Qualidade</span></div>
        <div class="t k k2">${alertClock(27, 27, "#67432d")}<span>Reclamações<br>de clientes</span></div>
        <div class="t k k3">${support}<span>Solicitações<br>de clientes</span></div>
        <div class="t no">Nenhum atendimento em andamento</div>
      </div>
      <div class="row ft ms"><span>Menu sempre visível</span><i></i><span class="oa">Ocultar automaticamente</span><i></i><div class="dot"></div></div>`;
  }
}

/* ---------- dashboard strip ---------- */

type Stat = [string, string, boolean?];

@customElement("crm-dashboard")
export class CrmDashboard extends LitElement {
  static styles = [base, css`
    :host { display: grid; grid-template-columns: repeat(5, 203.500px) 68px; gap: 5.300px; padding: 6px 3px 6px 5px; background: linear-gradient(#d0d0d0, #8a8a8a); box-shadow: 0 1px #000, 0 2px #999; font: 11px/14px "Liberation Sans", sans-serif; color: #fff; }
    .col { display: flex; flex-direction: column; }
    .tile { padding: 0 8px 0 5px; flex: none; overflow: hidden; box-shadow: 1px 1px #999; }
    .blue { background: #416bb6; } .olive { background: #6f9234; } .green { background: #207245; } .brown { background: #67432d; } .sky { background: #43a4d2; }
    .h74 { height: 74px; } .h63 { height: 63px; margin-top: 6px; padding-top: 3px; } .h57 { height: 57px; } .h78 { height: 78px; margin-top: 8px; padding-top: .5px; } .full { height: 143px; }
    .hd { height: 33px; display: flex; justify-content: space-between; font-size: 20px; line-height: 34px; }
    .hd svg { opacity: .8; margin-top: 7px; }
    .full .hd svg { margin-top: 5px; }
    .s { display: flex; justify-content: space-between; height: 17.500px; line-height: 18px; white-space: nowrap; }
    .s.bold { font-weight: 700; letter-spacing: .08px; }
    .v { height: 32.800px; line-height: 19px; padding-left: 1px; color: #fff; display: flex; align-items: flex-start; }
    .v.short { height: 15.500px; line-height: 16px; }
    .v svg { margin: 6px 31px 0 auto; } .v.short svg { margin-top: 4px; }
    .btn { display: flex; flex-direction: column; align-items: center; text-align: center; justify-content: center; line-height: 15px; letter-spacing: -.1px; }
    .p79 { height: 79px; background: #a4375d; gap: 10px; padding-bottom: 3px; } .p79 svg { opacity: .85; }
    .p58 { height: 58px; background: #8332ad; margin-top: 6px; }
  `];
  private s = (x: Stat) => html`<div class="s ${x[2] ? "bold" : ""}"><span>${x[0]}</span><span>${x[1]}</span></div>`;
  private hd = (t: string, icon: unknown) => html`<div class="hd"><span>${t}</span>${icon}</div>`;
  render() {
    const v = (t: string, short = false) => html`<div class="ms v ${short ? "short" : ""}">${t}${tri("down", "#000", 8)}</div>`;
    const S = (a: Stat[]) => a.map(this.s);
    return html`
      <div class="col"><div class="tile blue h74">${this.hd("Agendas", calClock("#fff", 17))}${S([["Minhas (próx. 7 dias):", "1", true], ["Minhas (próx. 30 dias):", "1"]])}</div>
        <div class="tile blue h63">${S([["Agendas geral (próx. 7 dias):", "21"], ["Agendas não concluídas:", "0"], ["Conclusão não aceita:", "1"]])}</div></div>
      <div class="col"><div class="tile olive h57">${this.hd("Atendimentos", compass(17))}${S([["Meus pendentes:", "0", true]])}</div>
        <div class="tile olive h78">${S([["Tempo de espera:", "IMEDIATO", true], ["Atendimentos em andamento:", "2"], ["Atendimentos aguardando:", "31"], ["Conclusão não aceita:", "0"]])}</div></div>
      <div class="tile green full">${this.hd("Qualidade", ribbon(18, 25))}${v("Visualizar: Mês Atual")}${S([["Registros não concluídos:", "3", true], ["Não conformidade preventiva:", "0"], ["Não conformidade corretiva:", "0"], ["Registro de Melhorias:", "0"]])}</div>
      <div class="tile brown full">${this.hd("Reclamações", alertClock(23, 23, "#67432d"))}${v("Visualizar: Mês Atual")}${S([["Registros não concluídos:", "4", true], ["Procedentes:", "0"], ["Não procedentes:", "0"], ["Total / Fator:", "0 / 0,00 %"]])}</div>
      <div class="tile sky full">${this.hd("Scrum", gear(21))}${v("Versão: 1.27.4.G-2", true)}${S([["Qtde. Ocorrências:", "28"], ["Qtde. Homologados:", "1"], ["IRD:", "0 / 0,00%"], ["IOC:", "1 / 100,00%"], ["C1V:", "1 / 100,00%"]])}</div>
      <div class="col"><div class="btn p79">${power(25)}<span>Fechar</span></div><div class="btn p58">Gráfico de<br>Atendimento</div></div>`;
  }
}

/* ---------- phone application ---------- */

@customElement("phone-window")
export class PhoneWindow extends LitElement {
  static styles = [base, css`
    :host { display: flex; flex-direction: column; border: 1px solid #9a9a9a; border-radius: 6px; background: linear-gradient(100deg, #333 0, #4a4a4a 18%, #111 42%, #050505 60%, #2c2c2c 75%, #0c0c0c); padding: 0 5px 5px; box-shadow: inset 0 0 0 1px #222; }
    .tt { height: 27px; gap: 5px; padding-left: 2px; font: 12px/16px "Open Sans", "Noto Sans", sans-serif; letter-spacing: -.2px; color: #000; }
    .tt span { background: #7778; box-shadow: 0 0 8px 5px #7778; border-radius: 8px; }
    .wb { margin: 0 0 8px auto; height: 19px; width: 103px; border: 1px solid #999; border-top: 0; border-radius: 0 0 5px 5px; display: grid; grid-template-columns: 28px 27px 1fr; }
    .wb div { display: flex; align-items: center; justify-content: center; border-right: 1px solid #777; background: linear-gradient(#555, #222 50%, #111 50%, #333); color: #fff; font: bold 13px/14px "Liberation Sans"; }
    .wb div:last-child { border: 0; } .mn { width: 11px; height: 4px; background: #fff; margin-top: 4px; } .mx { width: 10px; height: 9px; border: 3px solid #888; }
    .cl { flex: 1; border: 1px solid #ccc; background: #f0f0f0; display: flex; flex-direction: column; outline: 1px solid #111; }
    .menu { height: 20px; background: linear-gradient(#fff, #eef1fa 35%, #d5dcef 40%, #dfe6f5); border-bottom: 1px solid #b5b5b5; display: flex; gap: 14px; padding-left: 7px; font: 11.500px/20px "Open Sans", "Noto Sans", sans-serif; letter-spacing: -.22px; color: #6d6d6d; }
    .tools { height: 43px; border-bottom: 1px solid #999; padding-left: 11px; border-top: 1px solid #fff; }
    .in { width: 168px; height: 21px; background: #fff; border: 2px solid; border-color: #777 #ddd #ddd #777; }
    .ib { width: 24px; height: 24px; background: #e2e2ea; border: 1px solid #d0d0da; border-radius: 2px; display: flex; align-items: center; justify-content: center; }
    .sep { width: 1px; height: 42px; background: #999; }
    .grid { display: grid; grid-template-columns: repeat(5, 129.800px); grid-auto-rows: 26px; padding: 6px 0 0 9px; }
    .grid > div { display: flex; align-items: center; gap: 4px; font-size: 12px; letter-spacing: -.7px; }
    .grid .pl { color: #888; font: bold 15px/14px "Liberation Sans"; width: 37px; padding-left: 4px; }
    .dt { letter-spacing: 2.600px; font-size: 11px; }
  `];
  render() {
    const px = (w: number) => html`<div style="width:${w}px;flex:none"></div>`;
    const user = html`<svg width="16" height="16" viewBox="0 0 16 16"><rect width="16" height="16" rx="1.500" fill="#35b83a"/><path d="M1 1h14v6L1 10z" fill="#8fe08a" opacity=".6"/><path d="M8 3a3 3 0 0 1 2 5.500V10l3 1.500V14H3v-2.500L6 10V8.500A3 3 0 0 1 8 3z" fill="#fff" stroke="#2a8a2a" stroke-width=".7"/></svg>`;
    const dtmf = html`<svg width="16" height="16" viewBox="0 0 16 16"><rect width="16" height="16" rx="1.500" fill="#2793c4"/><path d="M0 1h16v5H0z" fill="#8bd0ee" opacity=".5"/><text x="2" y="7" font-size="7.500" font-weight="bold" fill="#08283c" font-family="Liberation Sans">1 2</text><text x="6" y="15" font-size="7.500" font-weight="bold" fill="#08283c" font-family="Liberation Sans">3</text></svg>`;
    const book = html`<svg width="18" height="19" viewBox="0 0 18 19"><rect x="1" y="1" width="14" height="17" rx="1" fill="#fff3c4" stroke="#c88a1c"/><path d="M4 5h8M4 8h8M4 11h8M4 14h6" stroke="#d89a30"/><path d="M16 2v4M16 13v4" stroke="#e0441c" stroke-width="2.500"/><path d="M16 7v5" stroke="#444" stroke-width="2.500"/></svg>`;
    const names = ["TONIEL", "FILIPE", "THIAGO"];
    return html`
      <div class="row tt">${phoneIcon(15, 15, "#1492c8")}<span>PIMphony Team (JEFERSON-AD, 27)</span>
        <div class="wb"><div><i class="mn"></i></div><div><i class="mx"></i></div><div>X</div></div></div>
      <div class="cl">
        <div class="menu"><span>Ficheiro</span><span>Ver</span><span>Ferramentas</span><span>Ajuda</span></div>
        <div class="row tools">
          <svg width="22" height="20" viewBox="0 0 22 20"><rect x="7" y="1" width="12" height="14" fill="#fff3c4" stroke="#c88a1c"/><path d="M9.500 4h7M9.500 7h7" stroke="#d89a30"/><path d="M20 2v4M20 10v5" stroke="#e0441c" stroke-width="2"/><path d="M6 13l-5 6" stroke="#9a5a20" stroke-width="3"/><circle cx="8" cy="10" r="4.500" fill="#cfe0ff" stroke="#6d7fc0" stroke-width="1.500"/></svg>
          ${px(8)}${tri("down", "#000", 7)}${px(6)}<div class="in"></div>${px(10)}${phoneIcon(24, 24, "#28b42c")}${px(8)}${tri("down", "#000", 7)}${px(12)}
          <div class="ib"><svg width="22" height="14" viewBox="0 0 22 14"><rect y="1" width="22" height="12" fill="#f3eec2"/><rect x="2" y="2" width="8" height="10" fill="#aaa"/><circle cx="6" cy="5" r="2" fill="#111"/><path d="M3 11c0-5 6-5 6 0z" fill="#111"/><path d="M12 3h8M12 6.500h8M12 10h8" stroke="#444"/></svg></div>
          ${px(9)}<div class="sep"></div>${px(10)}<div class="ib">${book}</div>${px(15)}
          <div class="ib"><svg width="18" height="19" viewBox="0 0 18 19"><path d="M4 1h8l4 4v12H4z" fill="#dce8fc" stroke="#3a5fb0" stroke-width="1.300"/><path d="M6 7h8M6 10h8M6 13h8" stroke="#5a7fd0"/><circle cx="5" cy="14" r="4" fill="#ffd24a" stroke="#c89010"/><path d="M5 12v2h2" stroke="#444" fill="none"/></svg></div>
          ${px(18)}<svg width="18" height="14" viewBox="0 0 18 14"><rect x=".5" y=".5" width="17" height="13" fill="none" stroke="#999" stroke-dasharray="1 1"/><path d="M3 7q6-5 12 0M4 10h10" stroke="#999" stroke-dasharray="1 1" fill="none"/></svg>
          ${px(18)}<div class="ib"><svg width="19" height="17" viewBox="0 0 19 17"><rect x=".5" y=".5" width="18" height="16" fill="#fff" stroke="#2c6ea8"/><rect width="19" height="4" fill="#3c86c4"/><path d="M3 7h2M3 10h2M3 13h2M11 7h2M11 13h2" stroke="#3a3" stroke-width="2"/><path d="M6 7h3M6 10h3M6 13h3M14 7h3M14 10h3M14 13h3" stroke="#666"/><path d="M11 10h2" stroke="#e84" stroke-width="2"/></svg></div>
          ${px(10)}<div class="sep"></div>
        </div>
        <div class="grid ms">
          ${names.map((n) => html`<div>${user}<span>${n}</span></div>`)}<div>${dtmf}<span>dtmf</span></div>
          ${Array.from({ length: 11 }, () => html`<div><span class="pl">+</span><span class="dt">...</span></div>`)}
        </div>
      </div>`;
  }
}

/* ---------- taskbar ---------- */

@customElement("task-bar")
export class TaskBar extends LitElement {
  static styles = [base, css`
    :host { display: flex; align-items: center; background: linear-gradient(#2a2a2a, #0c0c0c 40%, #080808); border-top: 1px solid #6b6b6b; font: 12px/16px "Open Sans", "Noto Sans", sans-serif; letter-spacing: -.2px; color: #fff; padding-left: 8px; }
    .orb { margin-top: -7px; height: 36px; width: 38px; align-self: flex-start; }
    .tk { width: 158px; height: 28px; margin-right: 4px; border: 1px solid #777; border-radius: 2px; background: linear-gradient(165deg, #777 0, #555 35%, #1d1d1d 55%, #222); display: flex; align-items: center; gap: 4px; padding: 0 0 2px 8px; white-space: nowrap; }
    .tk.on { background: linear-gradient(165deg, #bbb, #aaa 35%, #6e6e6e 52%, #9a9a9a); border-color: #ddd; }
    .q1 { width: 16px; margin: 0 29px 0 27px; } .q2 { margin-right: 16px; width: 18px; }
    .tray { margin-left: auto; display: flex; align-items: center; gap: 10px; } .clk { margin: 0 27px 0 25px; font-size: 11px; letter-spacing: -.3px; }
    .sd { width: 14px; height: 28px; border: 1px solid #555; background: linear-gradient(to right, #333, #111); }
  `];
  render() {
    const btn = (icon: unknown, t: string, on = false) => html`<div class="tk ${on ? "on" : ""}">${icon}<span>${t}</span></div>`;
    const pan = (s: number) => html`<svg width=${s} height=${s} viewBox="0 0 16 16"><circle cx="8" cy="8" r="7.500" fill="#f4e6f2" stroke="#4a1650"/><path d="M5 13V7a3.300 3.300 0 1 1 3.300 3.300" fill="none" stroke="#3a1048" stroke-width="2"/><circle cx="8.300" cy="7" r="1.300" fill="#c8164c"/></svg>`;
    return html`
      <svg class="orb" viewBox="0 0 38 36"><defs><radialGradient id="o" cy=".9" r=".9"><stop offset="0" stop-color="#5fe0ff"/><stop offset=".45" stop-color="#1c6aa8"/><stop offset="1" stop-color="#16304e"/></radialGradient></defs>
        <circle cx="19" cy="18" r="17.500" fill="url(#o)" stroke="#7d97a8"/><path d="M3 14A17 17 0 0 1 35 14Q19 20 3 14z" fill="#fff" opacity=".35"/>
        <path d="M10 11q4-2.500 8-.5l-1.500 7q-4-2-8 .5z" fill="#f0602a"/><path d="M20 11q4 2 8.500 0L27 18q-4.500 2-8.500 0z" fill="#8cc63e"/><path d="M8 20q4-2.500 8-.5l-1.500 7q-4-2-8 .5z" fill="#3c9be8"/><path d="M18 20q4 2 8.500 0L25 27q-4.500 2-8.500 0z" fill="#ffc82c"/></svg>
      <svg class="q1" height="16" viewBox="0 0 16 16"><circle cx="8" cy="8" r="7" fill="#2a5f9e"/><path d="M1 4C0 12 4 16 9 15.500S16 10 14 5c0 3-1 3-2 3 0-3-3-5-4-5 2 3-1 3-2 4s1 3 4 3c-3 2-6 1-6-2s-1-2-3-4z" fill="#f07a1a"/></svg>
      <svg class="q2" height="16" viewBox="0 0 18 16"><path d="M1 2h6l2 2h8v11H1z" fill="#f2d88a"/><path d="M3 7h12v8H3z" fill="#b7dcf0"/><path d="M6 15v-4h6v4" fill="#4d93c4"/></svg>
      ${btn(html`<svg width="16" height="16" viewBox="0 0 16 16"><circle cx="8" cy="8" r="6.500" fill="#12a5e6"/><circle cx="5" cy="5" r="4.500" fill="#12a5e6"/><circle cx="11" cy="11" r="4.500" fill="#12a5e6"/><path d="M10.800 5.600Q8 3.600 6 5.300T8 8t2 2.800-4.800-.5" stroke="#fff" stroke-width="1.700" fill="none"/></svg>`, "Skype™ - amz-jeffers...")}
      ${btn(phoneIcon(15, 15, "#1492c8"), "PIMphony Team (JEF...")}
      ${btn(pan(16), "Pangéia CRM", true)}
      ${btn(html`<svg width="16" height="16" viewBox="0 0 16 16"><ellipse cx="7" cy="9" rx="6.500" ry="6" fill="#d8e8ee"/><circle cx="5" cy="7" r="1.500" fill="#d33"/><circle cx="9" cy="7" r="1.500" fill="#39c"/><circle cx="5" cy="11" r="1.500" fill="#3a3"/><path d="M14 1v14" stroke="#e08a20" stroke-width="2"/></svg>`, "Panorama do Monit...")}
      <div class="tray">
        <svg width="14" height="14" viewBox="0 0 14 14"><path d="M1 2h9v5H1z" fill="#d22"/><path d="M5 7h8v5H5z" fill="#e33"/><path d="M7 9.500h4" stroke="#fff"/></svg>
        ${pan(14)}
        <svg width="14" height="14" viewBox="0 0 14 14" fill="none" stroke="#ddd" stroke-width="1.300"><path d="M4 3h9v6H4zM6 12h5M8.500 9v3M1 5h3M2.500 5v7h2"/></svg>
        <svg width="14" height="14" viewBox="0 0 14 14"><path d="M0 5h3l4-4v12L3 9H0z" fill="#ddd"/><path d="M9 4q2 3 0 6M11 2q3.500 5 0 10" stroke="#ddd" fill="none"/></svg>
        <svg width="14" height="14" viewBox="0 0 14 14"><path d="M3 1v12M3 2h8l-2 3 2 3H3z" fill="#eee" stroke="#ddd"/><circle cx="10" cy="10" r="4" fill="#d22"/><path d="M8 8l4 4M12 8l-4 4" stroke="#fff"/></svg>
        <svg width="14" height="14" viewBox="0 0 14 14"><rect width="14" height="14" fill="#f0cf5a"/><path d="M2 5h10M2 9h10M5 2v10M9 2v10" stroke="#a5761f"/></svg>
        <svg width="14" height="14" viewBox="0 0 14 14"><rect width="12" height="14" rx="1" fill="#f2ece6"/><path d="M3 3h5v3H3zM3 7h6v4H3z" fill="#d4402c"/><circle cx="11" cy="11" r="3" fill="#e22"/></svg>
        <svg width="14" height="14" viewBox="0 0 14 14"><circle cx="7" cy="7" r="6.500" fill="#2277c4"/><circle cx="7" cy="7" r="3.500" fill="none" stroke="#b8e0ff" stroke-width="1.500"/><circle cx="7" cy="7" r="1.300" fill="#fff"/></svg>
        <span class="clk">09:42</span>
      </div><div class="sd"></div>`;
  }
}

/* ---------- desktop ---------- */

@customElement("app-root")
export class AppRoot extends LitElement {
  static styles = css`
    :host { display: block; position: relative; width: 1920px; height: 1080px; background: #000; overflow: hidden; }
    .monitor, .form, .menu, .dash, .phone, .task { position: absolute; box-sizing: border-box; }
    .monitor { left: 123px; top: 50px; width: 1332px; height: 736px; background: linear-gradient(#222, #111 60%, #000); border: 0; box-shadow: inset 0 0 0 1px #5a5a5a, inset 0 0 0 2px #111; z-index: 1; }
    .form { left: 397px; top: 112px; width: 758px; height: 616px; background: linear-gradient(#aaa, #e4e4e4 15%, #ccc 60%, #eee); box-shadow: inset 0 0 0 1px #fafafa, 0 0 0 1px #3a3a3a, 0 2px 14px 3px #000b; z-index: 2; }
    .menu { left: 1471px; top: 203px; width: 299px; height: 500px; }
    .dash { left: 66px; top: 829px; width: 1120px; height: 155px; }
    .phone { left: 1214px; top: 811px; width: 669px; height: 191px; }
    .task { left: 0; top: 1051px; width: 1920px; height: 29px; }
  `;
  render() {
    return html`
      <crm-window class="monitor" main heading="Monitor de Atendimentos"><crm-monitor></crm-monitor></crm-window>
      <crm-window class="form" heading="Lançamento de Atendimento"><crm-form></crm-form></crm-window>
      <crm-menu class="menu"></crm-menu>
      <crm-dashboard class="dash"></crm-dashboard>
      <phone-window class="phone"></phone-window>
      <task-bar class="task"></task-bar>`;
  }
}
